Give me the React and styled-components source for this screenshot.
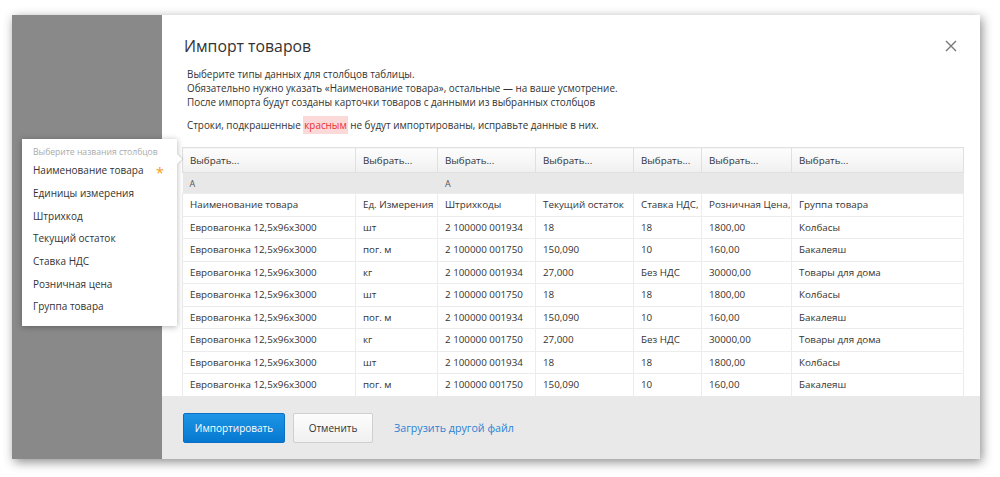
import React from 'react'
import styled, { createGlobalStyle } from 'styled-components'

const GlobalStyle = createGlobalStyle`
  html, body {
    margin: 0;
    padding: 0;
    background: #fff;
    font-family: "Open Sans", "Noto Sans", sans-serif;
    color: #333;
  }
`

const columns = [
  { width: 173, letter: 'A', title: 'Наименование товара' },
  { width: 82, letter: '', title: 'Ед. Измерения' },
  { width: 98, letter: 'A', title: 'Штрихкоды' },
  { width: 98, letter: '', title: 'Текущий остаток' },
  { width: 68, letter: '', title: 'Ставка НДС,' },
  { width: 90, letter: '', title: 'Розничная Цена,' },
  { width: 172, letter: '', title: 'Группа товара' },
]

const name = 'Евровагонка 12,5x96x3000'
const rows = [
  ['шт', '2 100000 001934', '18', '18', '1800,00', 'Колбасы'],
  ['пог. м', '2 100000 001750', '150,090', '10', '160,00', 'Бакалеяш'],
  ['кг', '2 100000 001934', '27,000', 'Без НДС', '30000,00', 'Товары для дома'],
  ['шт', '2 100000 001750', '18', '18', '1800,00', 'Колбасы'],
  ['пог. м', '2 100000 001934', '150,090', '10', '160,00', 'Бакалеяш'],
  ['кг', '2 100000 001750', '27,000', 'Без НДС', '30000,00', 'Товары для дома'],
  ['шт', '2 100000 001934', '18', '18', '1800,00', 'Колбасы'],
  ['пог. м', '2 100000 001750', '150,090', '10', '160,00', 'Бакалеяш'],
]

const fields = [
  'Наименование товара',
  'Единицы измерения',
  'Штрихкод',
  'Текущий остаток',
  'Ставка НДС',
  'Розничная цена',
  'Группа товара',
]

export default function App() {
  return (
    <>
      <GlobalStyle />
      <Page>
        <Frame>
          <Backdrop />
          <Modal>
            <Body>
              <Header>
                <Title>Импорт товаров</Title>
                <Close aria-label="Закрыть">
                  <svg width="12" height="12" viewBox="0 0 12 12">
                    <path d="M1 1L11 11M11 1L1 11" stroke="#777" strokeWidth="1.4" />
                  </svg>
                </Close>
              </Header>
              <Intro>
                Выберите типы данных для столбцов таблицы.
                <br />
                Обязательно нужно указать «Наименование товара», остальные — на ваше усмотрение.
                <br />
                После импорта будут созданы карточки товаров с данными из выбранных столбцов
              </Intro>
              <Intro>
                Строки, подкрашенные <Red>красным</Red> не будут импортированы, исправьте данные в них.
              </Intro>
              <Table>
                <colgroup>
                  {columns.map((c, i) => (
                    <col key={i} style={{ width: c.width }} />
                  ))}
                </colgroup>
                <thead>
                  <tr>
                    {columns.map((c, i) => (
                      <SelectCell key={i}>Выбрать...</SelectCell>
                    ))}
                  </tr>
                </thead>
                <tbody>
                  <LetterRow>
                    {columns.map((c, i) => (
                      <LetterCell key={i}>{c.letter}</LetterCell>
                    ))}
                  </LetterRow>
                  <tr>
                    {columns.map((c, i) => (
                      <Cell key={i}>{c.title}</Cell>
                    ))}
                  </tr>
                  {rows.map((r, i) => (
                    <tr key={i}>
                      <Cell>{name}</Cell>
                      {r.map((v, j) => (
                        <Cell key={j}>{v}</Cell>
                      ))}
                    </tr>
                  ))}
                </tbody>
              </Table>
            </Body>
            <Footer>
              <Button primary>Импортировать</Button>
              <Button>Отменить</Button>
              <Link href="#">Загрузить другой файл</Link>
            </Footer>
          </Modal>
          <Dropdown>
            <DropHint>Выберите названия столбцов</DropHint>
            {fields.map((f, i) => (
              <DropItem key={f}>
                {f}
                {i === 0 && <Star>*</Star>}
              </DropItem>
            ))}
          </Dropdown>
        </Frame>
      </Page>
    </>
  )
}

const Page = styled.div`
  padding: 15px 0 0 12px;
  height: 477px;
  box-sizing: border-box;
`
const Frame = styled.div`
  position: relative;
  width: 968px;
  height: 444px;
  display: flex;
  box-shadow: 2px 3px 10px rgba(0, 0, 0, 0.45);
`
const Backdrop = styled.div`
  width: 150px;
  background: #898989;
`
const Modal = styled.div`
  flex: 1;
  display: flex;
  flex-direction: column;
  background: #fff;
  overflow: hidden;
`
const Body = styled.div`
  flex: 1;
  overflow: hidden;
  padding: 0 16px 0 20px;
`
const Header = styled.div`
  display: flex;
  align-items: center;
  justify-content: space-between;
  height: 32px;
  margin-top: 15px;
  padding-right: 7px;
`
const Title = styled.h1`
  margin: 0 0 0 2px;
  font-size: 15.8px;
  font-weight: 400;
  color: #333;
`
const Close = styled.button`
  border: 0;
  background: none;
  padding: 0;
  width: 12px;
  height: 12px;
  display: flex;
  cursor: pointer;
`
const Intro = styled.p`
  margin: 0 0 9px 5px;
  font-size: 9.9px;
  line-height: 14px;
  color: #333;
  &:first-of-type {
    margin-top: 5px;
  }
  &:last-of-type {
    margin-bottom: 15px;
  }
`
const Red = styled.span`
  color: #e8302f;
  background: #fcd9d9;
  padding: 2px 1px;
`
const Table = styled.table`
  border-collapse: collapse;
  table-layout: fixed;
  width: 782px;
  font-size: 9.8px;
  color: #333;
  td, th {
    box-sizing: border-box;
  }
`
const SelectCell = styled.th`
  height: 25px;
  padding: 0 0 0 7px;
  text-align: left;
  font-weight: 400;
  border: 1px solid #e0e0e0;
  background: linear-gradient(#fdfdfd, #f0f0f0);
  box-shadow: 0 2px 2px rgba(0, 0, 0, 0.12);
  white-space: nowrap;
  overflow: hidden;
`
const LetterRow = styled.tr`
  background: #e8e8e8;
`
const LetterCell = styled.td`
  height: 21px;
  padding: 0 0 0 7px;
  font-size: 9px;
  color: #555;
  border-right: 1px solid #e8e8e8;
  vertical-align: middle;
`
const Cell = styled.td`
  height: 22.5px;
  padding: 0 0 0 7px;
  border: 1px solid #ececec;
  white-space: nowrap;
  overflow: hidden;
`
const Footer = styled.div`
  height: 63px;
  background: #e9e9e9;
  display: flex;
  align-items: center;
  padding: 0 0 0 21px;
  gap: 8px;
`
const Button = styled.button`
  height: 30px;
  padding: 0;
  border-radius: 2px;
  font-family: inherit;
  font-size: 10px;
  cursor: pointer;
  border: 1px solid ${(p) => (p.primary ? '#0a6fc2' : '#cfcfcf')};
  color: ${(p) => (p.primary ? '#fff' : '#333')};
  background: ${(p) =>
    p.primary ? 'linear-gradient(#1e95e6, #0579d0)' : 'linear-gradient(#fdfdfd, #f0f0f0)'};
  width: ${(p) => (p.primary ? '102px' : '80px')};
`
const Link = styled.a`
  margin-left: 13px;
  font-size: 10.7px;
  color: #2a82d6;
  text-decoration: none;
`
const Dropdown = styled.div`
  position: absolute;
  left: 10px;
  top: 124px;
  width: 155px;
  padding: 7px 0 8px;
  background: #fff;
  box-shadow: 0 1px 6px rgba(0, 0, 0, 0.3);
  &::after {
    content: '';
    position: absolute;
    right: -5px;
    top: 15px;
    border-left: 5px solid #fff;
    border-top: 5px solid transparent;
    border-bottom: 5px solid transparent;
    filter: drop-shadow(1px 0 1px rgba(0, 0, 0, 0.15));
  }
`
const DropHint = styled.div`
  padding: 0 11px;
  font-size: 8.6px;
  line-height: 12px;
  color: #aaa;
  margin-bottom: 1px;
`
const DropItem = styled.div`
  display: flex;
  align-items: center;
  padding: 0 11px;
  height: 22.7px;
  font-size: 10px;
  color: #333;
`
const Star = styled.span`
  margin-left: auto;
  margin-right: 2px;
  color: #f59b1a;
  font-size: 15px;
  line-height: 1;
  padding-top: 5px;
`
